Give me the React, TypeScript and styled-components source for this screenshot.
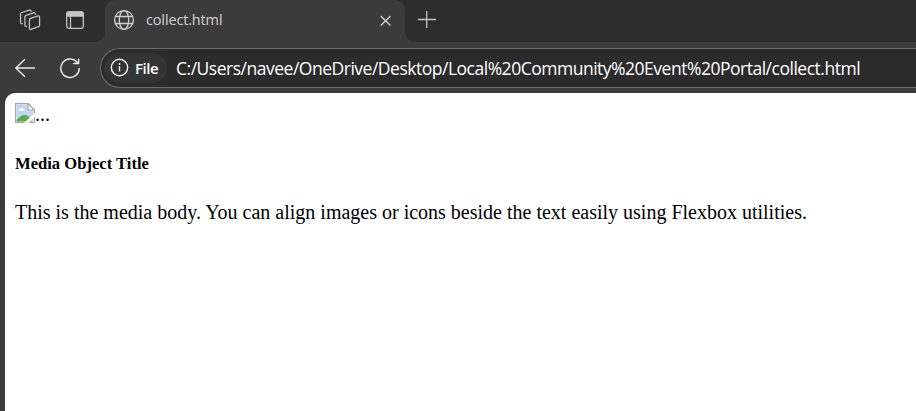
import React from 'react';
import styled, { createGlobalStyle } from 'styled-components';

const Global = createGlobalStyle`
  * { box-sizing: border-box; }
  html, body { margin: 0; padding: 0; background: #3b3b3b; overflow: hidden; }
`;

const Browser = styled.div`
  width: 916px;
  height: 411px;
  display: flex;
  flex-direction: column;
  background: #3b3b3b;
  overflow: hidden;
  font-family: 'Open Sans', 'Noto Sans', sans-serif;
`;

const TabStrip = styled.div`
  display: flex;
  height: 42px;
  flex: none;
`;

const StripActions = styled.div`
  width: 105px;
  padding: 9px 0 0 19px;
  display: flex;
  gap: 24px;
  background: #2d2d2d;
  border-bottom-right-radius: 10px;
`;

const TabSlot = styled.div`
  width: 300px;
  background: linear-gradient(#2d2d2d 14px, #3b3b3b 14px);
`;

const Tab = styled.div`
  height: 42px;
  padding: 0 12px 2px 8px;
  display: flex;
  align-items: center;
  background: #3b3b3b;
  border-radius: 10px 10px 0 0;
`;

const TabTitle = styled.span`
  flex: 1;
  margin-left: 11px;
  font-size: 14.5px;
  line-height: 20px;
  letter-spacing: -0.15px;
  color: #d2d2d2;
`;

const StripRest = styled.div`
  flex: 1;
  padding: 10px 0 0 12px;
  background: #2d2d2d;
  border-bottom-left-radius: 10px;
`;

const Toolbar = styled.div`
  height: 51px;
  flex: none;
  display: flex;
  align-items: center;
  padding-left: 14px;
`;

const ReloadSlot = styled.div`
  display: flex;
  margin: 2px 18px 0 24px;
`;

const AddressBar = styled.div`
  flex: 1;
  height: 40px;
  margin-top: 1px;
  padding-left: 3px;
  display: flex;
  align-items: center;
  background: #2b2b2b;
  border: 1px solid #6c6c6c;
  border-right: 0;
  border-radius: 20px 0 0 20px;
`;

const SchemeChip = styled.div`
  height: 30px;
  width: 63px;
  padding: 0 0 1px 6px;
  display: flex;
  align-items: center;
  gap: 6px;
  background: #343434;
  border-radius: 15px;
  color: #fff;
  font-size: 15px;
  font-weight: 600;
  letter-spacing: -0.45px;
`;

const Address = styled.span`
  margin-left: 9px;
  padding-bottom: 1px;
  color: #fff;
  font-size: 17.5px;
  line-height: 24px;
  letter-spacing: -0.488px;
  white-space: nowrap;
`;

const Page = styled.main`
  flex: 1;
  margin-left: 5px;
  padding: 10px;
  background: #fff;
  border-top-left-radius: 10px;
  color: #000;
  font-family: 'Liberation Serif', serif;
  font-size: 20px;
  line-height: 23px;
`;

const MissingImage = styled.div`
  display: flex;
  height: 23px;
  svg { flex: none; }
`;

const Title = styled.h5`
  margin: 28px 0 0;
  font-size: 16.6px;
  line-height: 19px;
  font-weight: 700;
`;

const Body = styled.p`
  margin: 28px 0 0;
  white-space: nowrap;
`;

const Workspaces = () => (
  <svg width="22" height="22" viewBox="0 0 22 22" fill="none" stroke="#c4c4c4" strokeWidth="1.25" strokeLinejoin="round" strokeLinecap="round">
    <path d="M11.6 9.4 19 6.9Q20.6 6.4 20.6 8.1V15.9Q20.6 17.1 19.4 17.6L12 20.4Q10.4 20.9 10.4 19.2V11.1Q10.4 9.8 11.6 9.4Z" />
    <path d="M7.6 17.5Q5.9 17.6 5.9 15.9V8Q5.9 6.8 7.1 6.3L14.5 3.8Q16.3 3.3 16.5 5.2" />
    <path d="M3.2 14.6Q1.5 14.7 1.5 13V5.2Q1.5 4 2.7 3.5L10.2 1.1Q12 .7 12.2 2.4" />
  </svg>
);

const VerticalTabs = () => (
  <svg width="20" height="22" viewBox="0 0 20 22" fill="none" stroke="#c4c4c4" strokeWidth="1.3">
    <rect x="1.7" y="3" width="16.6" height="16.3" rx="2.4" />
    <path d="M1.7 7V5Q1.7 3 3.8 3H16.2Q18.3 3 18.3 5V7Z" fill="#c4c4c4" />
    <path d="M5.5 7V19" />
  </svg>
);

const Globe = () => (
  <svg width="22" height="22" viewBox="0 0 22 22" fill="none" stroke="#d0d0d0" strokeWidth="1.3">
    <circle cx="11" cy="11" r="9.4" />
    <ellipse cx="11" cy="11" rx="4.7" ry="9.4" />
    <path d="M2.4 7.5H19.6M2.4 14.5H19.6" />
  </svg>
);

const Close = () => (
  <svg width="14" height="14" viewBox="0 0 14 14" stroke="#d0d0d0" strokeWidth="1.4">
    <path d="m1.8 2.9 9.6 9.6m0-9.6-9.6 9.6" />
  </svg>
);

const Plus = () => (
  <svg width="20" height="20" viewBox="0 0 20 20" stroke="#c4c4c4" strokeWidth="1.3">
    <path d="M1 9.5H19M9.7 1V18" />
  </svg>
);

const Back = () => (
  <svg width="22" height="20" viewBox="0 0 22 20" fill="none" stroke="#e8e8e8" strokeWidth="1.5" strokeLinecap="round" strokeLinejoin="round">
    <path d="M10.5 1.8 1.8 10l8.7 8.2M2 10H20.4" />
  </svg>
);

const Reload = () => (
  <svg width="22" height="22" viewBox="0 0 22 22" fill="none" stroke="#e8e8e8" strokeWidth="1.5" strokeLinecap="round" strokeLinejoin="round">
    <path d="M17.4 4.8A9.2 9.2 0 1 0 19.2 10.6M18.6 1.3V5.6H13.7" />
  </svg>
);

const Info = () => (
  <svg width="19" height="19" viewBox="0 0 19 19" fill="none" stroke="#f2f2f2" strokeWidth="1.4">
    <circle cx="9.5" cy="9.5" r="8.2" />
    <path d="M9.5 8.3V13.4" />
    <circle cx="9.5" cy="6" r=".9" fill="#f2f2f2" stroke="none" />
  </svg>
);

const BrokenImage = () => (
  <svg width="20" height="21" viewBox="0 0 20 21">
    <path d="M.6.6H13L19.4 7V19.5H.6Z" fill="#fff" stroke="#a3a3a3" strokeWidth="1.2" />
    <path d="M1.6 1.6H12.5V7.5H18.4V18.5H1.6Z" fill="#c3d5f3" />
    <path d="M3.3 8Q3.2 6.3 5 6.2Q6 3.7 8 5.5Q9.7 5.6 9.7 8Z" fill="#fff" />
    <path d="M1.6 18.5V17Q6.5 11.7 10 12Q14 12.2 17 18.5Z" fill="#57ac45" />
    <path d="M20 9.7V13.5L13 20.5H8.5Z" fill="#fff" />
    <path d="M13 .6V7H19.4" fill="#fff" stroke="#a3a3a3" strokeWidth="1.2" />
    <path d="M13 .6 19.4 7" stroke="#a3a3a3" strokeWidth="1.2" />
  </svg>
);

export default function App() {
  return (
    <Browser>
      <Global />
      <TabStrip>
        <StripActions>
          <Workspaces />
          <VerticalTabs />
        </StripActions>
        <TabSlot>
          <Tab>
            <Globe />
            <TabTitle>collect.html</TabTitle>
            <Close />
          </Tab>
        </TabSlot>
        <StripRest><Plus /></StripRest>
      </TabStrip>
      <Toolbar>
        <Back />
        <ReloadSlot><Reload /></ReloadSlot>
        <AddressBar>
          <SchemeChip><Info />File</SchemeChip>
          <Address>C:/Users/navee/OneDrive/Desktop/Local%20Community%20Event%20Portal/collect.html</Address>
        </AddressBar>
      </Toolbar>
      <Page>
        <MissingImage><BrokenImage />...</MissingImage>
        <Title>Media Object Title</Title>
        <Body>This is the media body. You can align images or icons beside the text easily using Flexbox utilities.</Body>
      </Page>
    </Browser>
  );
}
